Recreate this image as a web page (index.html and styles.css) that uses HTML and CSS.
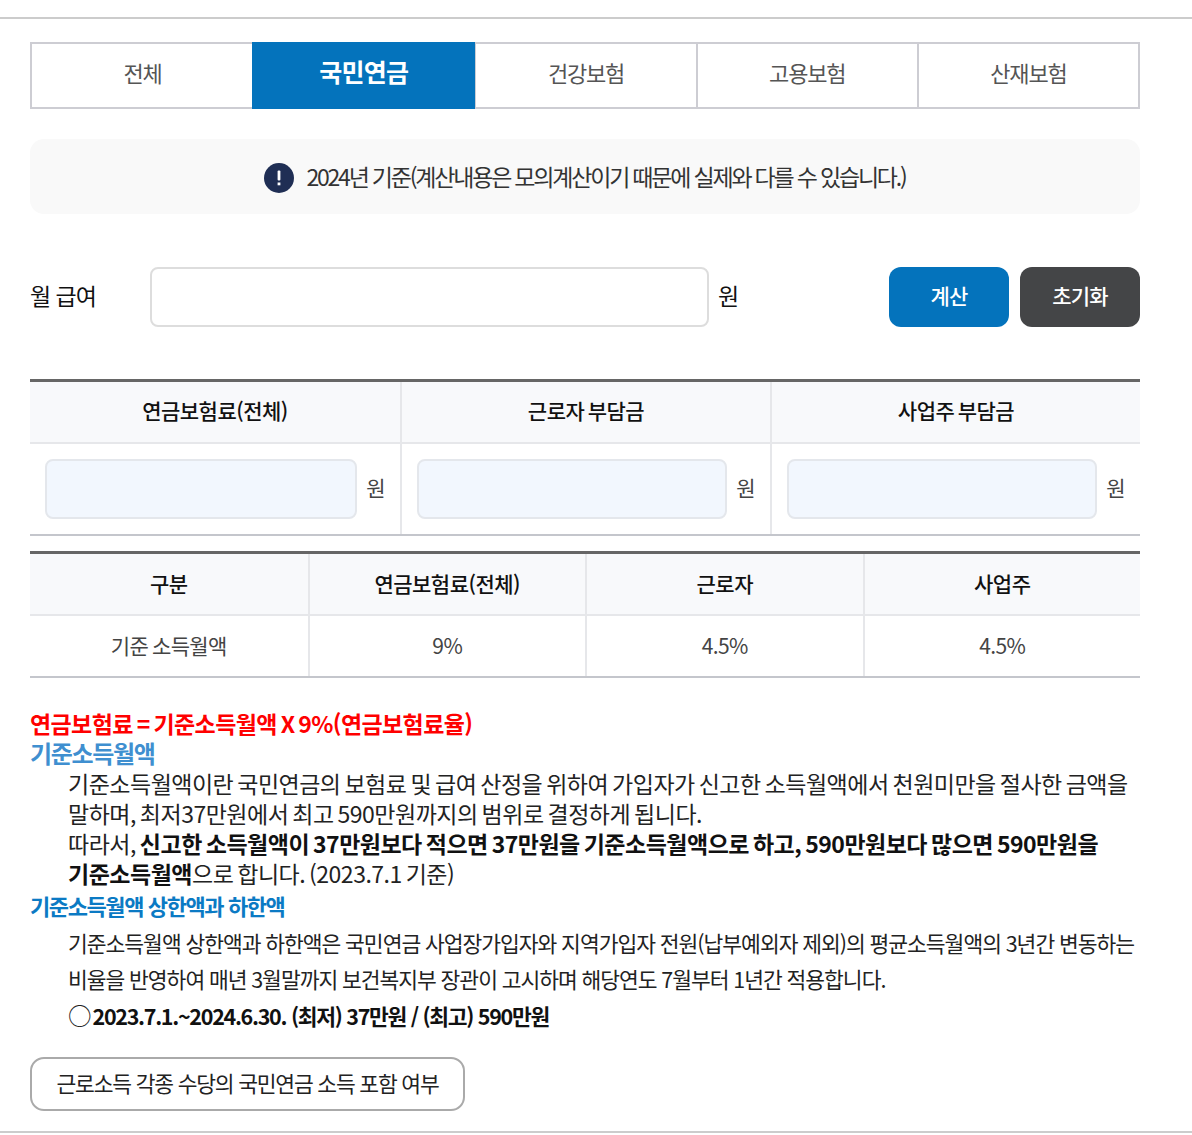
FILE: index.html
```html
<!DOCTYPE html>
<html lang="ko">
<head>
<meta charset="utf-8">
<title>국민연금 계산</title>
<link rel="stylesheet" href="styles.css">
</head>
<body>
<main class="page">
  <nav class="tabs">
    <a class="tab">전체</a>
    <a class="tab active">국민연금</a>
    <a class="tab">건강보험</a>
    <a class="tab">고용보험</a>
    <a class="tab">산재보험</a>
  </nav>
  <div class="notice">
    <svg class="notice-icon" viewBox="0 0 30 30" aria-hidden="true"><circle cx="15" cy="15" r="15" fill="#1f2e54"/><rect x="13.6" y="7.5" width="2.8" height="10" rx="1" fill="#fff"/><rect x="13.6" y="19.5" width="2.8" height="2.8" fill="#fff"/></svg>
    <span class="notice-text">2024년 기준(계산내용은 모의계산이기 때문에 실제와 다를 수 있습니다.)</span>
  </div>
  <div class="calc">
    <label class="calc-label">월 급여</label>
    <div class="calc-input"></div>
    <span class="calc-unit">원</span>
    <button class="btn primary">계산</button>
    <button class="btn dark">초기화</button>
  </div>
  <table class="grid result">
    <thead>
      <tr><th>연금보험료(전체)</th><th>근로자 부담금</th><th>사업주 부담금</th></tr>
    </thead>
    <tbody>
      <tr>
        <td><div class="out"><div class="out-box"></div><span class="out-unit">원</span></div></td>
        <td><div class="out"><div class="out-box"></div><span class="out-unit">원</span></div></td>
        <td><div class="out"><div class="out-box"></div><span class="out-unit">원</span></div></td>
      </tr>
    </tbody>
  </table>
  <table class="grid rates">
    <thead>
      <tr><th>구분</th><th>연금보험료(전체)</th><th>근로자</th><th>사업주</th></tr>
    </thead>
    <tbody>
      <tr><td>기준 소득월액</td><td>9%</td><td>4.5%</td><td>4.5%</td></tr>
    </tbody>
  </table>
  <section class="desc">
    <p class="red">연금보험료 = 기준소득월액 X 9%(연금보험료율)</p>
    <p class="sub light">기준소득월액</p>
    <div class="body">
      <p>기준소득월액이란 국민연금의 보험료 및 급여 산정을 위하여 가입자가 신고한 소득월액에서 천원미만을 절사한 금액을<br>말하며, 최저37만원에서 최고 590만원까지의 범위로 결정하게 됩니다.<br>따라서, <b>신고한 소득월액이 37만원보다 적으면 37만원을 기준소득월액으로 하고, 590만원보다 많으면 590만원을<br>기준소득월액</b>으로 합니다. (2023.7.1 기준)</p>
    </div>
    <p class="sub blue">기준소득월액 상한액과 하한액</p>
    <div class="body small">
      <p>기준소득월액 상한액과 하한액은 국민연금 사업장가입자와 지역가입자 전원(납부예외자 제외)의 평균소득월액의 3년간 변동하는<br>비율을 반영하여 매년 3월말까지 보건복지부 장관이 고시하며 해당연도 7월부터 1년간 적용합니다.</p>
      <p class="range"><span class="mark">○</span><b>2023.7.1.~2024.6.30. (최저) 37만원 / (최고) 590만원</b></p>
    </div>
  </section>
  <button class="more">근로소득 각종 수당의 국민연금 소득 포함 여부</button>
</main>
</body>
</html>
```
FILE: styles.css
```css
* { box-sizing: border-box; }
html, body { margin: 0; padding: 0; background: #fff; }
body {
  font-family: "Noto Sans CJK KR", "Noto Sans", sans-serif;
  color: #111;
  letter-spacing: -1px;
}
p { margin: 0; }
.page {
  height: 1116px;
  margin-top: 17px;
  padding: 23px 52px 0 30px;
  border-top: 2px solid #ccc;
  border-bottom: 2px solid #ccc;
}
.tabs {
  display: grid;
  grid-template-columns: repeat(5, 1fr);
  height: 67px;
  border: 2px solid #cdcdd3;
}
.tab {
  display: flex;
  align-items: center;
  justify-content: center;
  padding-bottom: 7px;
  font-size: 22px;
  letter-spacing: -1.2px;
  color: #555;
  border-left: 2px solid #cdcdd3;
}
.tab:first-child { border-left: 0; }
.tab.active {
  margin: -2px -1px;
  background: #0473bc;
  border-left: 0;
  color: #fff;
  font-weight: 700;
  font-size: 25px;
  letter-spacing: -0.7px;
  padding-bottom: 9px;
  position: relative;
}
.notice {
  display: flex;
  align-items: center;
  justify-content: center;
  gap: 12px;
  height: 75px;
  margin-top: 30px;
  background: #f9f9f9;
  border-radius: 14px;
  font-size: 23px;
  letter-spacing: -2.2px;
  color: #333;
}
.notice-text { padding-bottom: 2px; }
.notice-icon { width: 30px; height: 30px; flex: none; margin-top: 3px; }
.calc {
  display: flex;
  align-items: center;
  height: 60px;
  margin-top: 53px;
  font-size: 23px;
}
.calc-label { width: 120px; padding-bottom: 4px; color: #111; }
.calc-input {
  width: 559px;
  height: 60px;
  border: 2px solid #ddd;
  border-radius: 8px;
}
.calc-unit { margin-left: 9px; margin-right: auto; padding-bottom: 4px; }
.btn {
  width: 120px;
  height: 60px;
  padding: 0 0 4px;
  border: 0;
  border-radius: 12px;
  color: #fff;
  font: 500 21px "Noto Sans CJK KR", sans-serif;
  letter-spacing: -0.8px;
}
.btn.primary { background: #0473bc; }
.btn.dark { background: #444547; margin-left: 11px; }
.grid {
  width: 1110px;
  table-layout: fixed;
  border-collapse: separate;
  border-spacing: 0;
  border-top: 3px solid #666;
  border-bottom: 2px solid #c4c6cc;
}
.grid th, .grid td {
  padding: 0;
  text-align: center;
  border-left: 2px solid #e6e7ea;
}
.grid th:first-child, .grid td:first-child { border-left: 0; }
.grid th {
  height: 62px;
  padding-bottom: 4px;
  background: #f8f9fb;
  border-bottom: 2px solid #e6e7ea;
  font-size: 21px;
  font-weight: 500;
  letter-spacing: -0.5px;
  word-spacing: -2px;
  color: #111;
}
.grid td {
  font-size: 21px;
  letter-spacing: -0.6px;
  word-spacing: -1.5px;
  color: #444;
}
.result { margin-top: 52px; }
.result td { height: 90px; }
.out {
  display: flex;
  align-items: center;
  padding: 0 15px;
  gap: 9px;
}
.out-box {
  flex: 1;
  height: 60px;
  background: #f2f7fe;
  border: 2px solid #e4e7ec;
  border-radius: 8px;
}
.out-unit { padding-bottom: 4px; }
.rates { margin-top: 15px; }
.rates th { padding-bottom: 3px; }
.rates td { height: 60px; padding-bottom: 2px; }
.desc { margin-top: 30px; font-size: 23px; line-height: 30px; }
.red {
  color: #f00;
  font-weight: 700;
  letter-spacing: -0.6px;
  word-spacing: -2px;
}
.sub { font-weight: 700; }
.sub.light { color: #3f8fd0; font-size: 24px; letter-spacing: -1.35px; }
.sub.blue { color: #0b7ac4; font-size: 22px; line-height: 34px; letter-spacing: -1.4px; }
.body {
  padding-left: 38px;
  color: #222;
  letter-spacing: -0.5px;
  word-spacing: -2px;
}
.body b { color: #111; }
.body.small {
  padding-top: 3px;
  font-size: 21.5px;
  line-height: 36px;
  letter-spacing: -1px;
  word-spacing: -0.3px;
}
.range b { letter-spacing: -1.3px; word-spacing: 0; }
.mark { font-size: 23.5px; margin-right: 2px; }
.more {
  display: block;
  width: 435px;
  height: 54px;
  padding: 0 0 3px;
  margin-top: 23px;
  background: #fff;
  border: 2px solid #aaa;
  border-radius: 14px;
  color: #222;
  font: 400 21.5px "Noto Sans CJK KR", sans-serif;
  letter-spacing: -1.2px;
}
```
